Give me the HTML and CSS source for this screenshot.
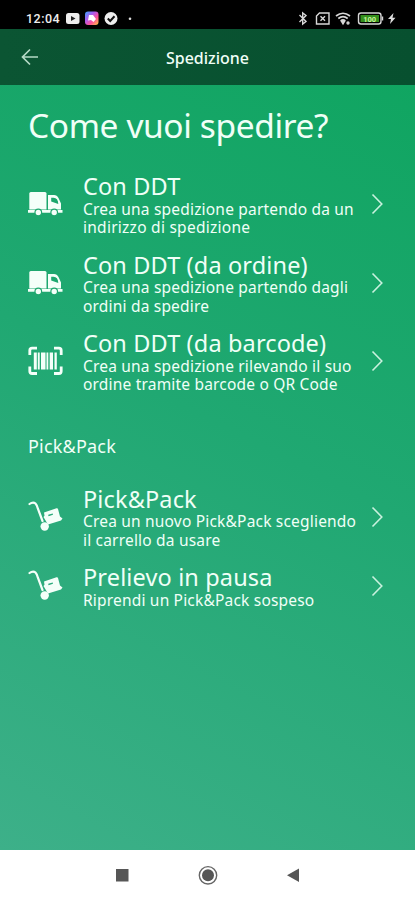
FILE: index.html
```html
<!DOCTYPE html>
<html lang="it">
<head>
<meta charset="utf-8">
<title>Spedizione</title>
<link rel="stylesheet" href="styles.css">
</head>
<body>
<svg width="0" height="0" class="defs">
  <defs>
    <linearGradient id="ig" x1="0" y1="0" x2="1" y2="1"><stop offset="0" stop-color="#35a8ff"/><stop offset=".35" stop-color="#a65bf0"/><stop offset=".65" stop-color="#ff4f9a"/><stop offset="1" stop-color="#ffc83c"/></linearGradient>
    <symbol id="truck" viewBox="0 0 36 26">
      <path d="M1.300 2.500Q1.300 1 2.800 1H17Q18.500 1 18.500 2.500V18.500H1.300Z"/>
      <path fill-rule="evenodd" d="M20 4H26Q29 4 30.500 7L33 12.500V18.500H20ZM23.200 6.700V10.500L30.300 13Q30 6.700 25.500 6.700Z"/>
      <path d="M0 19H34.500V21.800H0Z"/>
      <g class="wheel"><circle cx="10.300" cy="21.500" r="3.300"/><circle cx="26.200" cy="21.500" r="3.300"/></g>
    </symbol>
    <symbol id="barcode" viewBox="0 0 36 30">
      <path class="bracket" d="M1.800 9V4.500Q1.800 2.200 4.100 2.200H9M26 2.200H30.900Q33.200 2.200 33.200 4.500V9M33.200 20.500V25.200Q33.200 27.500 30.900 27.500H26M9 27.500H4.100Q1.800 27.500 1.800 25.200V20.500"/>
      <path d="M5.800 6.500H8.800V23.500H5.800ZM9.800 6.500H11.700V23.500H9.800ZM13 6.500H17.500V23.500H13ZM18.500 6.500H20.300V23.500H18.500ZM21.700 6.500H25V23.500H21.700ZM26.500 6.500H28.800V23.500H26.500Z"/>
    </symbol>
    <symbol id="dolly" viewBox="0 0 36 32">
      <path class="handle" d="M1.500 4Q5 1.300 7.500 3.500Q9 5 10 9L14.500 21"/>
      <path fill-rule="evenodd" d="M16 12.500L28.500 8.300Q29.700 8 30 9L32 16.500L34.500 18.500L33 20.500L20 24.500Q17.500 20.500 15.500 17L16.500 15.800ZM20.500 16.200L25 14.700L24.700 13.500L20.200 14.800Z"/>
      <circle cx="16.700" cy="26.500" r="4.200"/>
    </symbol>
    <symbol id="chevron" viewBox="0 0 14 22"><path d="M1.500 1.500L10.800 11L1.500 20.500"/></symbol>
  </defs>
</svg>
<div class="screen">
  <div class="status">
    <span class="clock">12:04</span>
    <svg class="left-icons" viewBox="0 0 70 16" width="70" height="16">
      <rect x="1" y="3" width="13.500" height="11" rx="2.500" fill="#eee"/><path d="M6 6L10.500 8.500L6 11Z" fill="#222"/>
      <rect x="20" y="1.500" width="13.500" height="13.500" rx="3" fill="url(#ig)"/><path d="M24 5H28L29.500 7L31 9L28.500 12L26 10L23 10.500Z" fill="#fff"/>
      <circle cx="46" cy="8.500" r="6.500" fill="#eee"/><path d="M42.800 8.500L45.200 11L49.500 6.300" fill="none" stroke="#111" stroke-width="2"/>
      <circle cx="65" cy="8.700" r="1.300" fill="#ddd"/>
    </svg>
    <svg class="right-icons" viewBox="0 0 100 16" width="100" height="16" fill="none" stroke="#d8d8d8" stroke-width="1.400">
      <path d="M1.500 5L8 11.500L4.700 14V3L8 5.500L1.500 12"/>
      <path d="M21.500 3H31V14H18.500V6Z"/><path d="M22.500 6.300L27 10.800M27 6.300L22.500 10.800"/>
      <path d="M38 6Q45 .5 52 6M40.300 8.500Q45 4.800 49.700 8.500M42.700 11Q45 9 47.300 11" stroke-width="1.700"/><path d="M43.500 11.500H46.500L45 14Z" fill="#ddd"/><circle cx="50" cy="13" r="1"/>
      <rect x="60.500" y="3" width="22.500" height="11" rx="2.500"/><path d="M84.500 6.500V10.500"/><rect x="62.500" y="5" width="18.500" height="7" fill="#348f1c" stroke="none"/>
      <text class="charge" x="71.700" y="11.500" text-anchor="middle">100</text>
      <path d="M95.500 3L90 9H93L92 14L97.500 7.800H94.500Z" fill="#ddd" stroke="none"/>
    </svg>
  </div>
  <header class="bar">
    <svg class="back" viewBox="0 0 18 18" width="18" height="18"><path d="M17 9H1.500M9 1.500L1.500 9L9 16.500"/></svg>
    <span class="bar-title">Spedizione</span>
  </header>
  <main>
    <h1>Come vuoi spedire?</h1>
    <div class="list">
      <div class="row"><svg class="icon truck"><use href="#truck"/></svg><div class="text"><h2>Con DDT</h2><p>Crea una spedizione partendo da un<br><span class="wide">indirizzo di spedizione</span></p></div><svg class="chevron"><use href="#chevron"/></svg></div>
      <div class="row"><svg class="icon truck"><use href="#truck"/></svg><div class="text"><h2>Con DDT (da ordine)</h2><p>Crea una spedizione partendo dagli<br>ordini da spedire</p></div><svg class="chevron"><use href="#chevron"/></svg></div>
      <div class="row"><svg class="icon barcode"><use href="#barcode"/></svg><div class="text"><h2>Con DDT (da barcode)</h2><p>Crea una spedizione rilevando il suo<br>ordine tramite barcode o QR Code</p></div><svg class="chevron"><use href="#chevron"/></svg></div>
    </div>
    <h3>Pick&amp;Pack</h3>
    <div class="list">
      <div class="row"><svg class="icon dolly"><use href="#dolly"/></svg><div class="text"><h2>Pick&amp;Pack</h2><p>Crea un nuovo Pick&amp;Pack scegliendo<br>il carrello da usare</p></div><svg class="chevron"><use href="#chevron"/></svg></div>
      <div class="row"><svg class="icon dolly"><use href="#dolly"/></svg><div class="text"><h2>Prelievo in pausa</h2><p>Riprendi un Pick&amp;Pack sospeso</p></div><svg class="chevron"><use href="#chevron"/></svg></div>
    </div>
  </main>
  <nav>
    <svg viewBox="0 0 200 20" width="200" height="20" fill="#565656">
      <rect x="8" y="4" width="12.500" height="12.500"/>
      <circle cx="100" cy="10.300" r="6"/><circle cx="100" cy="10.300" r="8.700" fill="none" stroke="#666" stroke-width="1.400"/>
      <path d="M179 10.300L191 3.500V17Z"/>
    </svg>
  </nav>
</div>
</body>
</html>
```
FILE: styles.css
```css
* { box-sizing: border-box; }
body { margin: 0; font-family: "Noto Sans", sans-serif; color: #f0fff7; }
.defs { position: absolute; }
h1, h2, h3, p { margin: 0; font-weight: 400; white-space: nowrap; }
.screen { width: 415px; height: 900px; display: flex; flex-direction: column; overflow: hidden; }
.status { height: 29px; background: #000; display: flex; align-items: flex-start; padding: 10px 17px 0 26px; }
.clock { font: 500 12.500px/17px Roboto, sans-serif; color: #eee; width: 39px; letter-spacing: .5px; }
.right-icons { margin-left: auto; }
.charge { font: 700 7.500px Roboto, sans-serif; fill: #c9f59d; stroke: none; }
.bar { height: 56px; background: linear-gradient(90deg, #0b5533, #07502f); display: grid; grid-template-columns: 61px 1fr 61px; align-items: center; }
.back { margin-left: 21px; fill: none; stroke: #b5dac6; stroke-width: 1.700; }
.bar-title { text-align: center; font-size: 16px; line-height: 20px; font-weight: 500; padding-top: 1px; }
main { height: 765px; padding: 19px 28px 0; background: linear-gradient(207deg, #10a561 0%, #20a872 45%, #3db089 100%); }
h1 { font-size: 33.500px; line-height: 42px; letter-spacing: -.39px; margin-bottom: 26px; }
.list { display: flex; flex-direction: column; gap: 14px; }
.row { display: grid; grid-template-columns: 55px 1fr 16px; align-items: center; }
.icon { fill: #f4fff9; }
.truck { width: 36px; height: 26px; }
.barcode { width: 36px; height: 30px; }
.dolly { width: 36px; height: 32px; margin-bottom: 2px; }
.wheel { stroke: #1fa76e; stroke-width: 1.200; }
.bracket { fill: none; stroke: #f4fff9; stroke-width: 2.800; }
.handle { fill: none; stroke: #f4fff9; stroke-width: 2.200; stroke-linecap: round; }
h2 { font-size: 23.500px; line-height: 27.500px; letter-spacing: .14px; padding-top: 1px; margin-bottom: -1px; }
p { font-size: 15.500px; line-height: 18.500px; letter-spacing: .19px; }
.wide { letter-spacing: .26px; }
.chevron { width: 14px; height: 22px; fill: none; stroke: #c9f1de; stroke-width: 1.600; }
h3 { font-size: 18px; line-height: 24px; letter-spacing: .2px; margin: 40px 0 27px; }
nav { height: 50px; background: #fff; display: flex; justify-content: center; padding-top: 15px; }
```
